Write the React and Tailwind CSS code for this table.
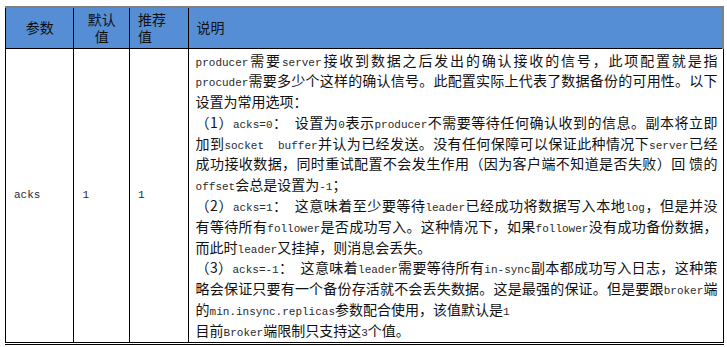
import React from 'react';

const cjk = "'Noto Sans CJK SC', 'Noto Sans', sans-serif";
const mono = "'Liberation Mono', 'DejaVu Sans Mono', monospace";

// each line of the 说明 cell: [justified?, segments]; 'm' = latin code text, 'c' = chinese
const lines = [
  [true, [['m', 'producer'], ['c', '需要'], ['m', 'server'], ['c', '接收到数据之后发出的确认接收的信号，此项配置就是指']]],
  [true, [['m', 'procuder'], ['c', '需要多少个这样的确认信号。此配置实际上代表了数据备份的可用性。以下']]],
  [false, [['c', '设置为常用选项：']]],
  [true, [['c', '（1）'], ['m', 'acks=0'], ['c', '：  设置为'], ['m', '0'], ['c', '表示'], ['m', 'producer'], ['c', '不需要等待任何确认收到的信息。副本将立即']]],
  [true, [['c', '加到'], ['m', 'socket  buffer'], ['c', '并认为已经发送。没有任何保障可以保证此种情况下'], ['m', 'server'], ['c', '已经']]],
  [true, [['c', '成功接收数据，同时重试配置不会发生作用（因为客户端不知道是否失败）回 馈的']]],
  [false, [['m', 'offset'], ['c', '会总是设置为'], ['m', '-1'], ['c', '；']]],
  [true, [['c', '（2）'], ['m', 'acks=1'], ['c', '：  这意味着至少要等待'], ['m', 'leader'], ['c', '已经成功将数据写入本地'], ['m', 'log'], ['c', '，但是并没']]],
  [true, [['c', '有等待所有'], ['m', 'follower'], ['c', '是否成功写入。这种情况下，如果'], ['m', 'follower'], ['c', '没有成功备份数据，']]],
  [false, [['c', '而此时'], ['m', 'leader'], ['c', '又挂掉，则消息会丢失。']]],
  [true, [['c', '（3）'], ['m', 'acks=-1'], ['c', '：  这意味着'], ['m', 'leader'], ['c', '需要等待所有'], ['m', 'in-sync'], ['c', '副本都成功写入日志，这种策']]],
  [true, [['c', '略会保证只要有一个备份存活就不会丢失数据。这是最强的保证。但是要跟'], ['m', 'broker'], ['c', '端']]],
  [false, [['c', '的'], ['m', 'min.insync.replicas'], ['c', '参数配合使用，该值默认是'], ['m', '1']]],
  [false, [['c', '目前'], ['m', 'Broker'], ['c', '端限制只支持这'], ['m', '3'], ['c', '个值。']]],
];

const Line = ({ justify, parts }) => (
  <div
    className={
      justify
        ? 'h-[20.8px] leading-[20.8px] whitespace-pre text-justify [text-align-last:justify]'
        : 'h-[20.8px] leading-[20.8px] whitespace-pre'
    }
  >
    {parts.map(([kind, text], i) =>
      kind === 'm' ? (
        <span key={i} className="text-[11px] leading-none text-[#2a2a2a]" style={{ fontFamily: mono }}>{text}</span>
      ) : (
        <span key={i} className="leading-none">{text}</span>
      )
    )}
  </div>
);

const App = () => {
  return (
    <div className="w-[727px] h-[347px] bg-white pt-[6px] pl-[5px]" style={{ fontFamily: cjk }}>
      <div className="w-[719px] border-t-2 border-t-[#7f7f7f] border-b-[3px] border-b-black border-double">
        <table className="table-fixed border-collapse text-[14px] text-[#111]">
          <colgroup>
            <col className="w-[69px]" />
            <col className="w-[56px]" />
            <col className="w-[59px]" />
            <col className="w-[535px]" />
          </colgroup>
          <thead>
            <tr className="h-[40px] bg-[#558ed5] leading-[17px]">
              <th className="border border-black border-t-0 font-normal text-center align-middle">参数</th>
              <th className="border border-black border-t-0 font-normal text-center align-middle px-2">默认值</th>
              <th className="border border-black border-t-0 font-normal text-left align-middle pl-2 pr-3">推荐值</th>
              <th className="border border-black border-t-0 border-r-[#7f7f7f] border-r-2 font-normal text-left align-middle pl-2">说明</th>
            </tr>
          </thead>
          <tbody>
            <tr>
              <td className="border border-black border-b-0 align-middle pl-2 text-[11px] text-[#2a2a2a]" style={{ fontFamily: mono }}>acks</td>
              <td className="border border-black border-b-0 align-middle pl-2 text-[11px] text-[#2a2a2a]" style={{ fontFamily: mono }}>1</td>
              <td className="border border-black border-b-0 align-middle pl-2 text-[11px] text-[#2a2a2a]" style={{ fontFamily: mono }}>1</td>
              <td className="border border-black border-b-0 align-top pl-[7px] pr-[5px] pt-[1px] pb-[1px]">
                {lines.map(([j, parts], i) => (
                  <Line key={i} justify={j} parts={parts} />
                ))}
              </td>
            </tr>
          </tbody>
        </table>
      </div>
    </div>
  );
};

export default App;
